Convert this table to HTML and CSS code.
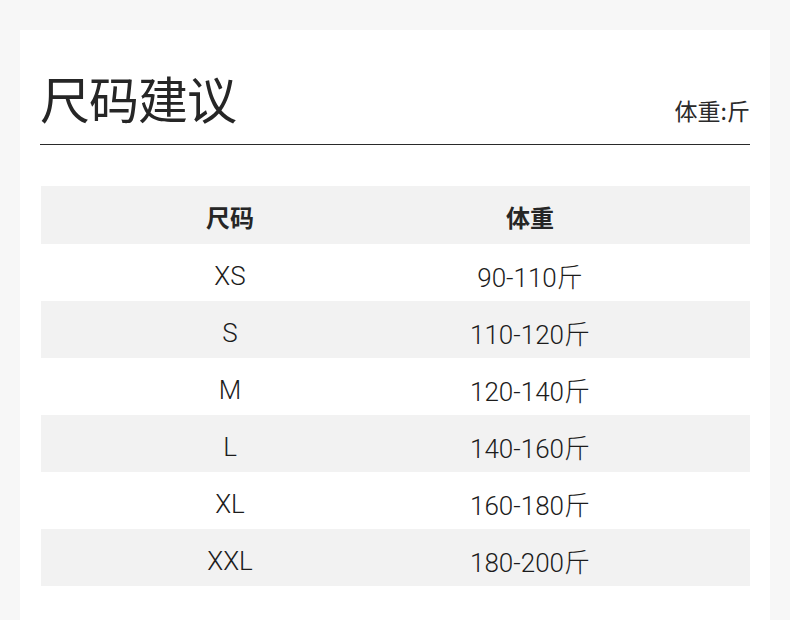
FILE: index.html
```html
<!DOCTYPE html>
<html lang="zh">
<head>
<meta charset="utf-8">
<link rel="stylesheet" href="styles.css">
</head>
<body>
<div class="card">
  <div class="head">
    <h1 class="title">尺码建议</h1>
    <span class="unit">体重:斤</span>
  </div>
  <div class="table">
    <div class="row row-head"><span>尺码</span><span>体重</span></div>
    <div class="row"><span>XS</span><span>90-110斤</span></div>
    <div class="row row-alt"><span>S</span><span>110-120斤</span></div>
    <div class="row"><span>M</span><span>120-140斤</span></div>
    <div class="row row-alt"><span>L</span><span>140-160斤</span></div>
    <div class="row"><span>XL</span><span>160-180斤</span></div>
    <div class="row row-alt"><span>XXL</span><span>180-200斤</span></div>
  </div>
</div>
</body>
</html>
```
FILE: styles.css
```css
html, body {
  margin: 0;
  padding: 0;
}
body {
  background: #f7f7f7;
  font-family: "Noto Sans CJK SC", "Noto Sans", sans-serif;
  color: #262626;
}
.card {
  margin: 30px 20px 0;
  background: #ffffff;
  padding: 42px 20px 60px;
}
.head {
  display: flex;
  justify-content: space-between;
  align-items: flex-end;
  padding-bottom: 22px;
  border-bottom: 1px solid #2a2a2a;
}
.title {
  margin: 0;
  font-size: 50px;
  font-weight: 400;
  line-height: 1;
  letter-spacing: -1px;
}
.unit {
  font-size: 23px;
  line-height: 1;
  color: #2a2a2a;
}
.table {
  margin-top: 41px;
  margin-left: 1px;
}
.row {
  display: grid;
  grid-template-columns: 378px 222px 1fr;
  height: 57px;
  align-items: center;
  font-family: Roboto, "Noto Sans CJK SC", sans-serif;
  font-weight: 300;
  font-size: 26px;
  color: #1c1c1c;
}
.row span {
  text-align: center;
  padding-top: 6px;
}
.row-head {
  height: 58px;
  background: #f2f2f2;
  font-family: "Noto Sans CJK SC", sans-serif;
  font-weight: 700;
  font-size: 24px;
  color: #262626;
}
.row-head span {
  padding-top: 2px;
}
.row-alt {
  background: #f2f2f2;
}
```
